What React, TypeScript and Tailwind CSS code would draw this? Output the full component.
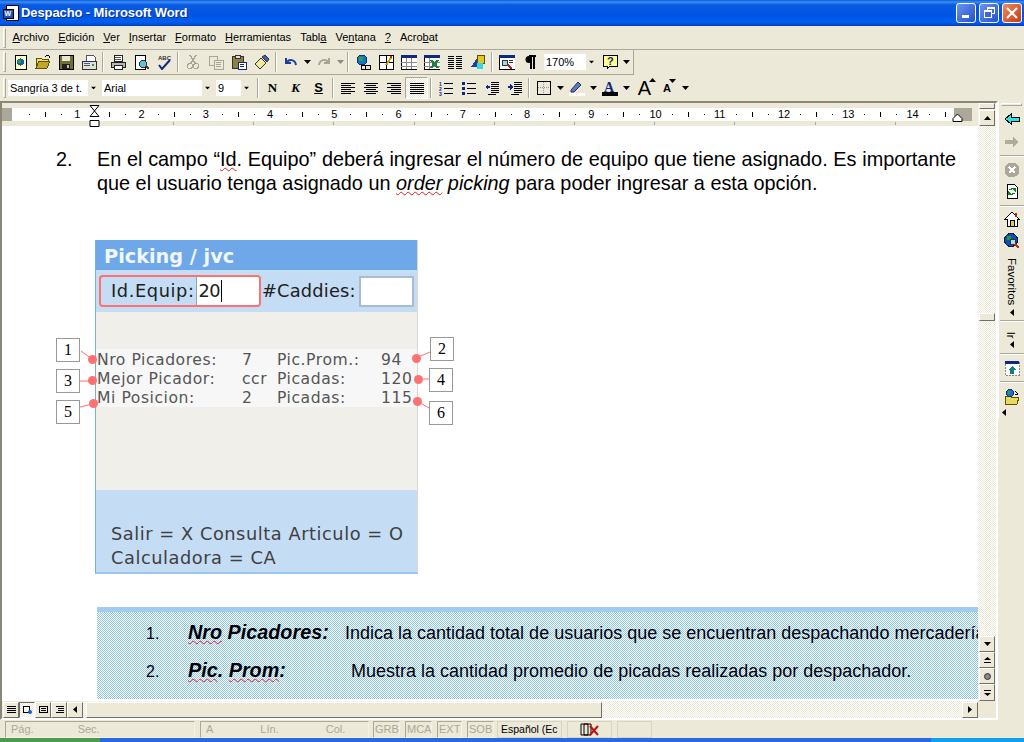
import * as React from 'react';

const S: React.FC<{ children: React.ReactNode; w?: number; h?: number }> = ({ children, w = 16, h = 16 }) => (
  <svg width={w} height={h} viewBox={`0 0 ${w} ${h}`} shapeRendering="crispEdges" className="shrink-0">
    {children}
  </svg>
);

const lines = (xs: number, xe: number, ys: number[], c = '#000') =>
  ys.map((y) => <rect key={y + '-' + xs} x={xs} y={y} width={xe - xs} height="1" fill={c} />);

const icons: Record<string, React.ReactNode> = {
  newDoc: (
    <S>
      <rect x="3" y="1" width="11" height="14" fill="#ffffc0" stroke="#000" />
      <circle cx="8.5" cy="8" r="3.6" fill="#1060c0" />
      <rect x="6" y="6" width="3" height="3" fill="#30a030" />
    </S>
  ),
  open: (
    <S>
      <path d="M1 4h5l1 1h6v2H4L1 14z" fill="#f0e070" stroke="#605000" />
      <path d="M4 7h11l-3 7H1z" fill="#c0a830" stroke="#605000" />
      <path d="M10 3l2-2 2 1v2" fill="none" stroke="#000" />
    </S>
  ),
  save: (
    <S>
      <rect x="1" y="1" width="14" height="14" fill="#707030" stroke="#000" />
      <rect x="4" y="2" width="8" height="5" fill="#e8e8d0" />
      <rect x="4" y="10" width="8" height="5" fill="#202020" />
      <rect x="9" y="11" width="2" height="3" fill="#c0c0c0" />
    </S>
  ),
  perm: (
    <S>
      <path d="M5 1h7l2 2v5H5z" fill="#fff" stroke="#555" />
      <rect x="1" y="7" width="14" height="8" fill="#e0e0e0" stroke="#333" />
      <rect x="3" y="9" width="6" height="1" fill="#3060c0" />
      <rect x="3" y="11" width="6" height="1" fill="#555" />
      <rect x="11" y="10" width="2" height="2" fill="#30a030" />
    </S>
  ),
  print: (
    <S>
      <rect x="4" y="1" width="8" height="6" fill="#fff" stroke="#222" />
      <path d="M1 8h14v5H1z" fill="#b8b8b0" stroke="#222" />
      <rect x="4" y="11" width="8" height="4" fill="#fff" stroke="#222" />
      {lines(5, 11, [3, 5], '#555')}
    </S>
  ),
  preview: (
    <S>
      <rect x="2" y="1" width="10" height="14" fill="#fff" stroke="#000" />
      <circle cx="10" cy="10" r="3.5" fill="#60c0d8" stroke="#333" />
      <path d="M13 12l3 3" stroke="#603030" strokeWidth="2" />
    </S>
  ),
  spell: (
    <S>
      <text x="2" y="6" fontSize="6" fontFamily="Liberation Sans" fontWeight="700" fill="#333">ABC</text>
      <path d="M3 11l3 4 8-9" fill="none" stroke="#102880" strokeWidth="2" shapeRendering="auto" />
    </S>
  ),
  cut: (
    <S>
      <path d="M5 1l5 8M11 1L6 9" stroke="#a8a498" strokeWidth="1.5" fill="none" />
      <circle cx="5" cy="12" r="2.5" fill="none" stroke="#a8a498" />
      <circle cx="11" cy="12" r="2.5" fill="none" stroke="#a8a498" />
    </S>
  ),
  copy: (
    <S>
      <rect x="1" y="2" width="8" height="9" fill="#ece9d8" stroke="#a8a498" />
      <rect x="6" y="6" width="9" height="9" fill="#ece9d8" stroke="#a8a498" />
      {lines(8, 13, [8, 10, 12], '#a8a498')}
    </S>
  ),
  paste: (
    <S>
      <rect x="1" y="2" width="11" height="12" fill="#908040" stroke="#333" />
      <rect x="4" y="1" width="5" height="3" fill="#ddd" stroke="#333" />
      <rect x="7" y="8" width="8" height="7" fill="#fff" stroke="#102880" />
      {lines(9, 13, [10, 12], '#102880')}
    </S>
  ),
  brush: (
    <S>
      <path d="M1 10l6-6 5 5-6 6z" fill="#f0e8a0" stroke="#333" shapeRendering="auto" />
      <path d="M8 3l3-2 4 4-2 3z" fill="#4060a0" stroke="#333" shapeRendering="auto" />
    </S>
  ),
  undo: (
    <S>
      <path d="M3 4v5h5" fill="none" stroke="#1840a0" strokeWidth="2" />
      <path d="M4 8c2-3 8-3 9 3" fill="none" stroke="#1840a0" strokeWidth="2" shapeRendering="auto" />
    </S>
  ),
  redo: (
    <S>
      <path d="M13 4v5H8" fill="none" stroke="#a8a498" strokeWidth="2" />
      <path d="M12 8c-2-3-8-3-9 3" fill="none" stroke="#a8a498" strokeWidth="2" shapeRendering="auto" />
    </S>
  ),
  web: (
    <S>
      <circle cx="7" cy="6" r="5" fill="#1870c8" stroke="#103070" />
      <rect x="4" y="3" width="4" height="4" fill="#30a040" />
      <rect x="6" y="11" width="4" height="4" fill="none" stroke="#000" />
      <rect x="10" y="11" width="5" height="4" fill="none" stroke="#000" />
    </S>
  ),
  drawTable: (
    <S>
      <rect x="1" y="1" width="14" height="14" fill="#fff" stroke="#000" />
      <path d="M8 1v14M1 8h14" stroke="#000" />
      <path d="M8 11l5-7" stroke="#d0a000" strokeWidth="2" />
      <rect x="12" y="2" width="2" height="2" fill="#c02020" />
    </S>
  ),
  table: (
    <S>
      <rect x="0" y="1" width="16" height="14" fill="#fff" stroke="#000" />
      <rect x="0" y="1" width="16" height="3" fill="#102880" />
      <path d="M5 4v11M10 4v11M0 8h16M0 12h16" stroke="#888" />
    </S>
  ),
  excel: (
    <S>
      <rect x="0" y="1" width="16" height="14" fill="#fff" stroke="#000" />
      <rect x="0" y="1" width="16" height="3" fill="#102880" />
      <path d="M0 8h16M0 12h16M5 4v11" stroke="#888" />
      <path d="M7 6l7 8M14 6l-7 8" stroke="#208040" strokeWidth="2.4" />
    </S>
  ),
  columns: <S>{lines(1, 7, [2, 4, 6, 8, 10, 12, 14])}{lines(9, 15, [2, 4, 6, 8, 10, 12, 14])}</S>,
  drawing: (
    <S>
      <path d="M1 13l6-9v9z" fill="#1840a0" />
      <rect x="7" y="1" width="7" height="8" fill="#e0c820" stroke="#605000" />
      <circle cx="10" cy="12" r="3.5" fill="#30d8e8" />
    </S>
  ),
  docmap: (
    <S>
      <rect x="0" y="1" width="16" height="14" fill="#fff" stroke="#000" />
      <rect x="0" y="1" width="16" height="3" fill="#102880" />
      <circle cx="6" cy="9" r="3" fill="#a0d8e8" stroke="#333" />
      <path d="M9 11l4 4" stroke="#c02020" strokeWidth="2" />
      {lines(10, 14, [6, 8], '#333')}
    </S>
  ),
  pilcrow: (
    <S>
      <path d="M7 2h7M9 2v13M12 2v13" stroke="#000" strokeWidth="1.4" fill="none" />
      <path d="M9 2H7a3.5 3.5 0 000 7h2z" fill="#000" shapeRendering="auto" />
    </S>
  ),
  help: (
    <S>
      <path d="M1 1h14v11H8l-3 3v-3H1z" fill="#ffff90" stroke="#000" />
      <text x="5" y="11" fontSize="11" fontWeight="700" fontFamily="Liberation Sans" fill="#102880">?</text>
    </S>
  ),
  alignLeft: <S>{lines(1, 15, [3, 7, 11])}{lines(1, 11, [5, 9, 13])}</S>,
  alignCenter: <S>{lines(1, 15, [3, 7, 11])}{lines(3, 13, [5, 9, 13])}</S>,
  alignRight: <S>{lines(1, 15, [3, 7, 11])}{lines(5, 15, [5, 9, 13])}</S>,
  justify: <S>{lines(1, 15, [3, 5, 7, 9, 11, 13])}</S>,
  numbered: (
    <S>
      <text x="1" y="6" fontSize="5" fontWeight="700" fontFamily="Liberation Sans" fill="#102880">1</text>
      <text x="1" y="11" fontSize="5" fontWeight="700" fontFamily="Liberation Sans" fill="#102880">2</text>
      <text x="1" y="16" fontSize="5" fontWeight="700" fontFamily="Liberation Sans" fill="#102880">3</text>
      {lines(6, 15, [3, 8, 13])}
    </S>
  ),
  bullets: (
    <S>
      <rect x="1" y="2" width="3" height="3" fill="#102880" />
      <rect x="1" y="7" width="3" height="3" fill="#102880" />
      <rect x="1" y="12" width="3" height="3" fill="#102880" />
      {lines(6, 15, [3, 8, 13])}
    </S>
  ),
  outdent: (
    <S>
      {lines(7, 15, [2, 4, 6, 8, 10, 12])}
      <path d="M1 7l3-3v2h2v2H4v2z" fill="#102880" />
      {lines(4, 12, [14])}
    </S>
  ),
  indent: (
    <S>
      {lines(7, 15, [2, 4, 6, 8, 10, 12])}
      <path d="M6 7L3 4v2H1v2h2v2z" fill="#102880" />
      {lines(4, 12, [14])}
    </S>
  ),
  borders: (
    <S>
      <rect x="1" y="1" width="13" height="13" fill="none" stroke="#000" />
      <path d="M7.5 2v12M2 7.5h12" stroke="#999" strokeDasharray="1 1" />
    </S>
  ),
  highlight: (
    <S>
      <path d="M2 10l7-8 3 3-7 7H2z" fill="#5878d0" stroke="#333" shapeRendering="auto" />
      <rect x="0" y="13" width="16" height="3" fill="#fff" />
    </S>
  ),
  fontColor: (
    <S>
      <text x="2" y="12" fontSize="14" fontWeight="700" fontFamily="Liberation Serif" fill="#102880">A</text>
      <rect x="0" y="12" width="16" height="4" fill="#000" />
    </S>
  ),
  back: (
    <S>
      <path d="M1 8l6-5v3h8v4H7v3z" fill="#30e0e8" stroke="#000" />
    </S>
  ),
  forward: (
    <S>
      <path d="M15 8l-6-5v3H1v4h8v3z" fill="#b0ac9c" />
    </S>
  ),
  stop: (
    <S>
      <circle cx="8" cy="8" r="7.5" fill="#aca899" />
      <path d="M5 5l6 6M11 5l-6 6" stroke="#fff" strokeWidth="2" />
    </S>
  ),
  refresh: (
    <S>
      <path d="M3 1h7l3 3v11H3z" fill="#fff" stroke="#000" />
      <path d="M6 7a3 3 0 015 0v-2M10 10a3 3 0 01-5 0v2" stroke="#108020" strokeWidth="1.5" fill="none" />
    </S>
  ),
  home: (
    <S>
      <path d="M1 8l7-7 7 7h-2v7H3V8z" fill="#fff" stroke="#000" />
      <rect x="6" y="9" width="4" height="6" fill="#e8d020" stroke="#000" />
      <rect x="11" y="2" width="2" height="4" fill="#a03020" />
    </S>
  ),
  search: (
    <S>
      <circle cx="7" cy="7" r="6.5" fill="#1050b0" stroke="#102040" />
      <rect x="3" y="3" width="4" height="4" fill="#309040" />
      <circle cx="9" cy="9" r="3" fill="#a8e0e8" stroke="#333" />
      <path d="M11 11l4 4" stroke="#d02020" strokeWidth="2" />
    </S>
  ),
  channel: (
    <S>
      <rect x="1" y="1" width="14" height="14" fill="#fff" stroke="#888" strokeDasharray="2 1" />
      <rect x="1" y="1" width="14" height="3" fill="#102880" />
      <path d="M8 6l4 4h-2v4H6v-4H4z" fill="#108080" />
    </S>
  ),
  folderWeb: (
    <S>
      <path d="M1 7h5l1 1h8l-2 7H1z" fill="#e8d860" stroke="#605000" />
      <circle cx="6" cy="4" r="3.5" fill="#2070c8" stroke="#103070" />
      <rect x="4" y="2" width="2" height="3" fill="#30a040" />
      <path d="M11 2l3 3-3 1" fill="none" stroke="#000" />
    </S>
  ),
};

const Arrow: React.FC<{ dir?: 'down' | 'up' | 'left' | 'right'; className?: string }> = ({ dir = 'down', className = '' }) => {
  const d = { down: 'M0 0h7L3.5 4z', up: 'M0 4h7L3.5 0z', left: 'M4 0v7L0 3.5z', right: 'M0 0v7l4-3.5z' }[dir];
  const hz = dir === 'down' || dir === 'up';
  return (
    <svg width={hz ? 7 : 4} height={hz ? 4 : 7} viewBox={`0 0 ${hz ? 7 : 4} ${hz ? 4 : 7}`} className={`shrink-0 ${className}`}>
      <path d={d} fill="#000" />
    </svg>
  );
};

const Grip = () => <div className="w-[3px] h-[20px] ml-[3px] mr-[2px] border border-[#fff] border-r-[#aca899] border-b-[#aca899] shrink-0" />;
const Sep = () => <div className="w-[2px] h-[20px] mx-[2px] bg-[#aca899] border-r border-white shrink-0" />;

const Btn: React.FC<{ i: string }> = ({ i }) => <div className="w-[23px] h-[22px] flex items-center justify-center shrink-0">{icons[i]}</div>;
const Drop = () => <div className="w-[10px] h-[22px] flex items-center justify-center shrink-0"><Arrow /></div>;

const Combo: React.FC<{ w: string; children: React.ReactNode }> = ({ w, children }) => (
  <div className={`${w} h-[16px] bg-white flex items-center justify-between pl-[2px] mr-[4px] shrink-0`}>
    <span className="text-[11px] text-black truncate">{children}</span>
    <span className="w-[10px] h-[16px] bg-[#ece9d8] flex items-center justify-center shrink-0"><Arrow className="scale-75" /></span>
  </div>
);

const CM = 64.25;
const Ruler = () => {
  const nums = Array.from({ length: 14 }, (_, i) => i + 1);
  const marks: { x: number; tall: boolean }[] = [];
  for (let n = 0; n < 15; n++) {
    [16, 32, 48].forEach((o) => {
      const x = 11 + n * CM + o;
      if (x > 12 && x < 953) marks.push({ x, tall: o === 32 });
    });
  }
  return (
    <div className="relative z-10 w-full h-[23px] shrink-0">
      <div className="absolute left-0 top-[5px] w-[970px] h-[13px] bg-[#aca899]" />
      <div className="absolute left-[10px] top-[5px] w-[942px] h-[13px] bg-white" />
      {marks.map((m) => (
        <div
          key={m.x}
          className="absolute w-px bg-black"
          style={{ left: m.x, top: m.tall ? 9 : 11, height: m.tall ? 5 : 1 }}
        />
      ))}
      {nums.map((n) => (
        <span
          key={n}
          className="absolute top-[4px] w-5 text-center text-[11px] leading-[15px] text-black"
          style={{ left: 11 + n * CM - 10 }}
        >
          {n}
        </span>
      ))}
      {Array.from({ length: 10 }, (_, n) => (
        <div key={n} className="absolute top-[19px] w-px h-[3px] bg-[#aca899]" style={{ left: 171 + n * 80.2 }} />
      ))}
      {/* indent markers */}
      <svg width="12" height="22" viewBox="0 0 12 22" className="absolute left-[87px] top-[2px]">
        <path d="M1 .5h9L5.5 6 10 11.5H1L5.5 6z M1 15.5h9v6H1z" fill="#fff" stroke="#000" />
      </svg>
      <svg width="12" height="9" viewBox="0 0 12 9" className="absolute left-[950px] top-[10px]">
        <path d="M1 8.5v-3L5.5 1 10 5.5v3z" fill="#fff" stroke="#000" />
      </svg>
    </div>
  );
};

const Callout: React.FC<{ n: number; box: string }> = ({ n, box }) => (
  <div className={`absolute w-[24px] h-[24px] bg-white border border-[#999] flex items-center justify-center text-[16px] font-['Liberation_Serif',serif] text-black ${box}`}>
    {n}
  </div>
);

const Dot: React.FC<{ pos: string }> = ({ pos }) => <div className={`absolute w-[9px] h-[9px] rounded-full bg-[#ff7070] ${pos}`} />;

const Tx: React.FC<{ children: React.ReactNode; cls: string }> = ({ children, cls }) => (
  <div className={`h-[17px] px-[5px] flex items-center border border-[#aca899] border-r-[#f5f3e8] border-b-[#f5f3e8] text-[11px] text-[#aca899] shrink-0 ${cls}`}>{children}</div>
);

const ScrollBtn: React.FC<{ children: React.ReactNode; h?: string }> = ({ children, h = 'h-[16px]' }) => (
  <div className={`w-[16px] ${h} bg-[#ece9d8] border border-white border-r-[#716f64] border-b-[#716f64] flex items-center justify-center shrink-0`}>{children}</div>
);

const dither = 'bg-[repeating-conic-gradient(#ece9d8_0%_25%,#ffffff_0%_50%)] bg-[length:2px_2px]';
const spell = 'underline decoration-wavy decoration-[#e02020] decoration-1';

const VSep: React.FC<{ cls: string }> = ({ cls }) => <div className={`w-[24px] h-[2px] shrink-0 border-t border-[#aca899] border-b border-b-white ${cls}`} />;

export default function App() {
  return (
    <div className="w-[1024px] h-[742px] overflow-hidden flex flex-col bg-[#ece9d8] font-['Liberation_Sans',Arial,sans-serif]">
      {/* Title bar */}
      <div className="h-[26px] shrink-0 flex items-center bg-[linear-gradient(#0a5fe0_0%,#3c8cf5_8%,#0a5be0_18%,#0054e3_60%,#0060f0_85%,#003fc0_100%)] pl-[3px] pr-[2px]">
        <svg width="16" height="16" viewBox="0 0 16 16" shapeRendering="crispEdges" className="mr-[2px] shrink-0">
          <rect x="3" y="0" width="12" height="15" fill="#fff" stroke="#000" />
          <rect x="0" y="4" width="10" height="9" fill="#2050b0" stroke="#000" />
          <text x="1.5" y="11" fontSize="7" fontWeight="700" fontFamily="Liberation Sans" fill="#fff">W</text>
        </svg>
        <span className="text-white font-bold text-[13px] tracking-[-0.1px] flex-1 [text-shadow:1px_1px_#0a2f90]">Despacho - Microsoft Word</span>
        <div className="flex gap-[3px]">
          <div className="w-[20px] h-[20px] rounded-[3px] border border-white bg-[linear-gradient(135deg,#6a94ee,#2350d0)] flex items-end pl-[5px] pb-[4px]">
            <div className="w-[7px] h-[3px] bg-white" />
          </div>
          <div className="w-[20px] h-[20px] rounded-[3px] border border-white bg-[linear-gradient(135deg,#6a94ee,#2350d0)] relative">
            <div className="absolute left-[7px] top-[3px] w-[8px] h-[7px] border border-white border-t-2" />
            <div className="absolute left-[4px] top-[6px] w-[8px] h-[8px] border border-white border-t-2 bg-[#3d68dc]" />
          </div>
          <div className="w-[20px] h-[20px] rounded-[3px] border border-white bg-[linear-gradient(135deg,#ee8a60,#c83a10)] flex items-center justify-center">
            <svg width="12" height="12" viewBox="0 0 12 12"><path d="M1 1l10 10M11 1L1 11" stroke="#fff" strokeWidth="2.2" /></svg>
          </div>
        </div>
      </div>

      {/* Menu bar */}
      <div className="h-[24px] shrink-0 flex items-center border-b border-[#aca899]">
        <Grip />
        <div className="flex items-center text-[11px] text-black">
          {[
            ['', 'A', 'rchivo'], ['', 'E', 'dición'], ['', 'V', 'er'], ['', 'I', 'nsertar'], ['', 'F', 'ormato'],
            ['', 'H', 'erramientas'], ['Tabl', 'a', ''], ['Ve', 'n', 'tana'], ['', '?', ''], ['Acro', 'b', 'at'],
          ].map(([a, u, c]) => (
            <span key={a + u + c} className="px-[4.5px]">
              {a}<span className="underline">{u}</span>{c}
            </span>
          ))}
        </div>
      </div>

      {/* Standard toolbar */}
      <div className="h-[25px] shrink-0 flex">
        <div className="w-[634px] flex items-center border-r border-b border-[#aca899] border-r-[#aca899]">
          <Grip />
          {['newDoc', 'open', 'save', 'perm'].map((i) => <Btn key={i} i={i} />)}
          <Sep />
          {['print', 'preview', 'spell'].map((i) => <Btn key={i} i={i} />)}
          <Sep />
          {['cut', 'copy', 'paste', 'brush'].map((i) => <Btn key={i} i={i} />)}
          <Sep />
          <Btn i="undo" />
          <Drop />
          <Btn i="redo" />
          <div className="w-[10px] flex justify-center opacity-40"><Arrow /></div>
          <Sep />
          {['web', 'drawTable', 'table', 'excel', 'columns', 'drawing'].map((i) => <Btn key={i} i={i} />)}
          <Sep />
          {['docmap', 'pilcrow'].map((i) => <Btn key={i} i={i} />)}
          <div className="ml-[3px]">
            <div className="w-[52px] h-[16px] bg-white flex items-center justify-between pl-[2px] text-[11px] text-black">
              170%
              <span className="w-[10px] h-[16px] bg-[#ece9d8] flex items-center justify-center"><Arrow className="scale-75" /></span>
            </div>
          </div>
          <div className="ml-[2px]"><Btn i="help" /></div>
          <Drop />
        </div>
      </div>

      {/* Formatting toolbar */}
      <div className="h-[26px] shrink-0 flex">
        <div className="w-[692px] flex items-center">
          <Grip />
          <Combo w="w-[90px]">Sangría 3 de t.</Combo>
          <Combo w="w-[110px]">Arial</Combo>
          <Combo w="w-[35px]">9</Combo>
          <Sep />
          <div className="w-[23px] text-center text-[13px] font-bold font-['Liberation_Serif',serif] text-black shrink-0">N</div>
          <div className="w-[23px] text-center text-[13px] font-bold italic font-['Liberation_Serif',serif] text-black shrink-0">K</div>
          <div className="w-[23px] text-center text-[13px] font-bold underline text-black shrink-0">S</div>
          <Sep />
          {['alignLeft', 'alignCenter', 'alignRight'].map((i) => <Btn key={i} i={i} />)}
          <div className={`w-[23px] h-[22px] flex items-center justify-center border border-[#aca899] border-r-white border-b-white ${dither}`}>{icons.justify}</div>
          <Sep />
          {['numbered', 'bullets', 'outdent', 'indent'].map((i) => <Btn key={i} i={i} />)}
          <Sep />
          <Btn i="borders" />
          <Drop />
          <Btn i="highlight" />
          <Drop />
          <Btn i="fontColor" />
          <Drop />
          <div className="w-[23px] ml-[2px] flex justify-center shrink-0 items-end relative">
            <span className="text-[20px] leading-[20px] font-medium text-black">A</span>
            <span className="absolute right-[0px] top-0"><Arrow dir="up" /></span>
          </div>
          <div className="w-[20px] ml-[1px] flex justify-center shrink-0 items-end relative">
            <span className="text-[11px] leading-[18px] font-bold text-black">A</span>
            <span className="absolute right-[1px] top-0"><Arrow /></span>
          </div>
          <div className="ml-[3px]"><Drop /></div>
        </div>
      </div>

      {/* Document area + right toolbar */}
      <div className="h-[619px] shrink-0 flex min-h-0">
        <div className="w-[998px] flex flex-col shrink-0 border-l-2 border-t-2 border-[#8a8778] border-r-2 border-r-white border-b-2 border-b-white">
          {/* Ruler row + scroll */}
          <div className="flex-1 flex min-h-0">
            <div className="w-[976px] flex flex-col shrink-0 min-h-0">
              <Ruler />
              <div className="relative flex-1 bg-white overflow-hidden">
                {/* Step text */}
                <div className="flex pt-[21px] pl-[54px] text-[19.85px] leading-[24px] text-black">
                  <span className="w-[41px] shrink-0">2.</span>
                  <div className="w-[859px] whitespace-nowrap">
                    <p className="[text-align:justify] [text-align-last:justify] whitespace-normal">
                      En el campo “<span className={spell}>Id</span>. Equipo” deberá ingresar el número de equipo que tiene asignado. Es importante
                    </p>
                    <p>
                      que el usuario tenga asignado un <i><span className={spell}>order</span> picking</i> para poder ingresar a esta opción.
                    </p>
                  </div>
                </div>

                {/* Picking mock */}
                <div className="ml-[93px] mt-[45px] w-[323px] h-[334px] flex flex-col border-l border-[#78aeea] border-r border-r-[#d8d8d8] border-b-2 border-b-[#9cc4f0] font-['DejaVu_Sans',sans-serif]">
                  <div className="h-[30px] shrink-0 bg-[#6fa8e8] text-[#f2f7fd] font-bold text-[19.3px] flex items-center pl-[8px] pt-[4px]">Picking / jvc</div>
                  <div className="h-[42px] shrink-0 bg-[#c5dcf5] flex items-center pl-[3px] text-[17.8px] text-[#202020]">
                    <div className="w-[162px] h-[32px] rounded-[4px] border-[2px] border-[#ff7070] flex items-center overflow-hidden pl-[10px] shrink-0">
                      <span className="tracking-[0.6px]">Id.Equip:</span>
                      <div className="ml-[1px] flex-1 h-full bg-white flex items-center pl-[2px] border-l border-[#88a8c8] tracking-[-0.6px]">20<span className="w-px h-[22px] bg-black ml-[1px]" /></div>
                    </div>
                    <span className="ml-[1px] tracking-[0.2px]">#Caddies:</span>
                    <div className="ml-[3px] w-[55px] h-[31px] bg-white border-2 border-[#a8bcd0]" />
                  </div>
                  <div className="flex-1 bg-[#f1efea] pt-[37px]">
                    <div className="h-[58px] pt-[2px] bg-[#f7f7f7] grid grid-cols-[145px_35px_104px_1fr] text-[15.6px] leading-[19px] tracking-[0.55px] text-[#555] pl-[1px] whitespace-nowrap">
                      <span>Nro Picadores:</span><span>7</span><span>Pic.Prom.:</span><span>94</span>
                      <span>Mejor Picador:</span><span>ccr</span><span>Picadas:</span><span>120</span>
                      <span>Mi Posicion:</span><span>2</span><span>Picadas:</span><span>115</span>
                    </div>
                  </div>
                  <div className="h-[82px] shrink-0 bg-[#c5dcf5] pt-[32px] pl-[15px] text-[17.8px] leading-[24px] tracking-[0.55px] text-[#404040] whitespace-nowrap">
                    <div>Salir = X Consulta Articulo = O</div>
                    <div>Calculadora = CA</div>
                  </div>
                </div>

                {/* Callouts */}
                <svg width="480" height="100" viewBox="0 0 480 100" className="absolute left-0 top-[200px]">
                  <path d="M79 25l11 8M428 26l-14 6M78 55h12M427 53h-11M78 81l13-3M427 82l-12-7" stroke="#ff7070" fill="none" />
                </svg>
                <Callout n={1} box="left-[54px] top-[212px]" />
                <Callout n={2} box="left-[428px] top-[211px]" />
                <Callout n={3} box="left-[54px] top-[243px]" />
                <Callout n={4} box="left-[427px] top-[242px]" />
                <Callout n={5} box="left-[54px] top-[274px]" />
                <Callout n={6} box="left-[427px] top-[275px]" />
                <Dot pos="left-[86px] top-[229px]" />
                <Dot pos="left-[410px] top-[228px]" />
                <Dot pos="left-[86px] top-[250px]" />
                <Dot pos="left-[412px] top-[249px]" />
                <Dot pos="left-[87px] top-[273px]" />
                <Dot pos="left-[411px] top-[271px]" />

                {/* Notes box */}
                <div className="absolute left-[95px] top-[481px] w-[900px] h-[92px] bg-[#a0ccee] pt-[5px]">
                  <div className="h-[87px] bg-[repeating-conic-gradient(#8cc6f2_0%_25%,#ffffff_0%_50%)] bg-[length:2px_2px] text-black whitespace-nowrap">
                    <div className="flex items-baseline pl-[49px] h-[39px] pt-[6px] text-[16px]">
                      <span className="w-[42px] shrink-0 text-[16px]">1.</span>
                      <b className="italic text-[19.8px] w-[157px] shrink-0"><span className={spell}>Nro</span> Picadores:</b>
                      <span className="text-[18px]">Indica la cantidad total de usuarios que se encuentran despachando mercadería</span>
                    </div>
                    <div className="flex items-baseline pl-[49px] h-[39px] pt-[5px] text-[16px]">
                      <span className="w-[42px] shrink-0">2.</span>
                      <b className="italic text-[19.8px] w-[163px] shrink-0"><span className={spell}>Pic</span>. <span className={spell}>Prom</span>:</b>
                      <span className="text-[18px]">Muestra la cantidad promedio de picadas realizadas por despachador.</span>
                    </div>
                  </div>
                </div>
              </div>
            </div>
            {/* Vertical scrollbar */}
            <div className={`w-[18px] shrink-0 flex flex-col items-center ${dither}`}>
              <div className="w-[16px] h-[6px] bg-[#ece9d8] border border-white border-r-[#716f64] border-b-[#716f64] mt-[0px] mb-[1px] shrink-0" />
              <ScrollBtn><Arrow dir="up" /></ScrollBtn>
              <div className="w-[16px] h-[8px] mt-[187px] bg-[#ece9d8] border border-white border-r-[#716f64] border-b-[#716f64] shrink-0" />
              <div className="flex-1" />
              <ScrollBtn><Arrow /></ScrollBtn>
              <ScrollBtn><svg width="7" height="7" viewBox="0 0 7 7"><path d="M3.5 0L7 3H0zM0 5h7v1H0z" /></svg></ScrollBtn>
              <ScrollBtn><svg width="7" height="7" viewBox="0 0 7 7"><circle cx="3.5" cy="3.5" r="3" fill="#888" stroke="#333" /></svg></ScrollBtn>
              <ScrollBtn h="h-[17px]"><svg width="7" height="7" viewBox="0 0 7 7"><path d="M3.5 7L7 4H0zM0 1h7v1H0z" /></svg></ScrollBtn>
            </div>
          </div>
          {/* Horizontal scrollbar */}
          <div className={`h-[17px] shrink-0 flex items-center ${dither}`}>
            <div className="flex items-center h-full bg-[#ece9d8] pl-[1px] shrink-0">
              <ScrollBtn><svg width="9" height="7" viewBox="0 0 9 7"><path d="M0 0h9v1H0zM0 2h9v1H0zM0 4h9v1H0zM0 6h9v1H0z" /></svg></ScrollBtn>
              <div className={`w-[16px] h-[16px] border border-[#716f64] border-r-white border-b-white flex items-center justify-center shrink-0 ${dither}`}><svg width="9" height="8" viewBox="0 0 9 8"><rect x=".5" y=".5" width="6" height="6" fill="#fff" stroke="#000" /><circle cx="7" cy="6" r="2" fill="#1060c0" /></svg></div>
              <ScrollBtn><svg width="9" height="7" viewBox="0 0 9 7"><rect x=".5" y=".5" width="8" height="6" fill="none" stroke="#000" /><path d="M2 2.5h5M2 4.5h5" stroke="#000" /></svg></ScrollBtn>
              <ScrollBtn><svg width="9" height="7" viewBox="0 0 9 7"><path d="M1 0h8v1H1zM3 2h6v1H3zM3 4h6v1H3zM1 6h8v1H1z" /></svg></ScrollBtn>
              <ScrollBtn><Arrow dir="left" /></ScrollBtn>
            </div>
            <div className="ml-[3px] w-[516px] h-[16px] bg-[#ece9d8] border border-white border-r-[#716f64] border-b-[#716f64] shrink-0" />
            <div className="flex-1" />
            <ScrollBtn><Arrow dir="right" /></ScrollBtn>
            <div className="w-[18px] h-full bg-[#ece9d8] shrink-0" />
          </div>
        </div>

        {/* Web toolbar (vertical) */}
        <div className="w-[26px] shrink-0 flex flex-col items-center">
          <div className="h-[317px] w-full flex flex-col items-center border-l border-white pt-[2px]">
            <div className="w-[21px] h-[3px] border border-white border-r-[#aca899] border-b-[#aca899] mb-[1px] shrink-0" />
            <div className="h-[23px] flex items-center shrink-0">{icons.back}</div>
            <div className="h-[23px] flex items-center shrink-0">{icons.forward}</div>
            <VSep cls="my-[2px]" />
            <div className="h-[21px] flex items-center shrink-0">{icons.stop}</div>
            <div className="h-[21px] flex items-center shrink-0">{icons.refresh}</div>
            <VSep cls="mt-[4px] mb-[1px]" />
            <div className="h-[22px] flex items-center shrink-0">{icons.home}</div>
            <div className="h-[22px] flex items-center shrink-0">{icons.search}</div>
            <span className="[writing-mode:vertical-rl] text-[11.5px] text-black h-[54px] pt-[6px] shrink-0">Favoritos</span>
            <Arrow dir="left" className="mt-[3px]" />
            <VSep cls="mt-[4px]" />
            <span className="rotate-90 text-[11px] text-black h-[14px] mt-[6px] leading-[14px] shrink-0">Ir</span>
            <Arrow dir="left" className="-mt-[1px]" />
            <VSep cls="mt-[5px] mb-[2px]" />
            <div className="h-[22px] flex items-center shrink-0">{icons.channel}</div>
            <VSep cls="mt-[2px] mb-[3px]" />
            <div className="h-[22px] flex items-center shrink-0">{icons.folderWeb}</div>
            <Arrow dir="left" className="self-start ml-[3px] mt-[1px]" />
          </div>
        </div>
      </div>

      {/* Status bar */}
      <div className="h-[17px] shrink-0 flex items-center pl-[5px] mt-[1px]">
        <Tx cls="w-[190px] gap-[44px]"><span>Pág.</span><span>Sec.</span></Tx>
        <Tx cls="w-[169px] ml-[5px] gap-[47px]"><span>A</span><span>Lín.</span><span>Col.</span></Tx>
        <Tx cls="w-[27px] ml-[4px] px-[1px]!">GRB</Tx>
        <Tx cls="w-[27px] ml-[5px] px-[1px]!">MCA</Tx>
        <Tx cls="w-[25px] ml-[5px] px-[1px]!">EXT</Tx>
        <Tx cls="w-[27px] ml-[5px] px-[1px]!">SOB</Tx>
        <div className="w-[65px] h-[17px] ml-[3px] px-[3px] flex items-center border border-[#d8d4c0] text-[10.5px] text-black whitespace-nowrap overflow-hidden shrink-0">Español (Ec</div>
        <div className="w-[45px] h-[17px] ml-[5px] flex items-center justify-center border border-[#d8d4c0] shrink-0">
          <svg width="20" height="14" viewBox="0 0 20 14">
            <path d="M1 1h7v11H1zM4 1h7v11H4z" fill="none" stroke="#000" />
            <path d="M10 3l8 9M18 3l-8 9" stroke="#c01010" strokeWidth="2" />
          </svg>
        </div>
        <div className="w-[35px] h-[17px] ml-[5px] border border-[#d8d4c0] shrink-0" />
      </div>

      {/* Taskbar strip */}
      <div className="h-[4px] shrink-0 flex mt-auto">
        <div className="w-[100px] bg-[#4f9a4f]" />
        <div className="flex-1 bg-[#2a6ae0]" />
        <div className="w-[93px] bg-[#10a0e8]" />
      </div>
    </div>
  );
}
